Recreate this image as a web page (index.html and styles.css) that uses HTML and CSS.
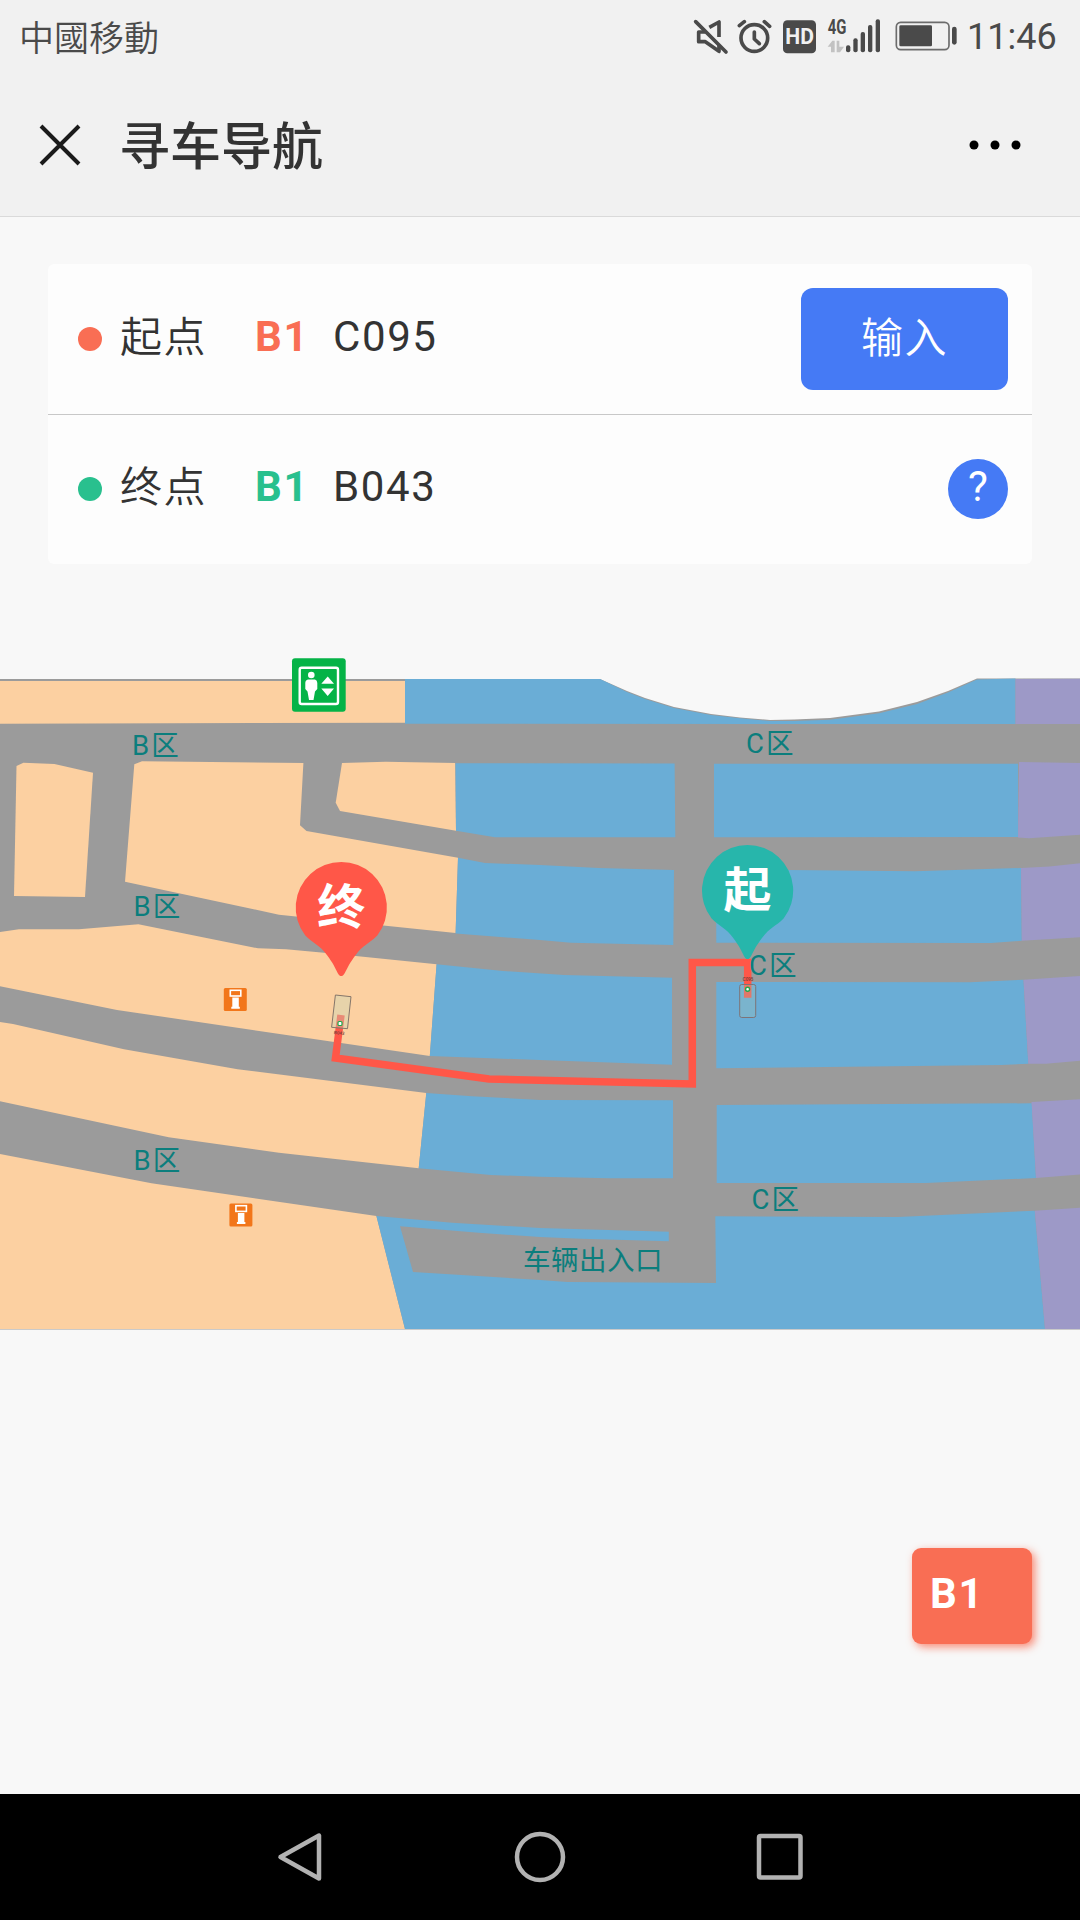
FILE: index.html
```html
<!DOCTYPE html>
<html lang="zh-CN">
<head>
<meta charset="utf-8">
<title>寻车导航</title>
<link rel="stylesheet" href="styles.css">
</head>
<body>
<header class="top">
  <div class="status">
    <span class="carrier">中國移動</span>
    <div class="status-right">
      <svg class="status-icons" width="266" height="38" viewBox="99 50 798 114">
        <g fill="none" stroke="#4a4a4a" stroke-width="11">
          <path d="M148 81L177 65V110M136 95H116V124H136L177 153V134" stroke-linejoin="round"/>
          <path d="M107 64L198 155" stroke-linecap="round"/>
          <circle cx="283" cy="113" r="40"/>
          <path d="M283 95V116L298 130" stroke-linecap="round" stroke-linejoin="round"/>
          <path d="M238 76L253 64M313 64L329 78" stroke-linecap="round"/>
        </g>
        <rect x="369" y="60" width="99" height="99" rx="13" fill="#4a4a4a"/>
        <text class="hd" x="376" y="132" textLength="86" lengthAdjust="spacingAndGlyphs">HD</text>
        <text class="net" x="503" y="101" textLength="56" lengthAdjust="spacingAndGlyphs">4G</text>
        <path d="M503 139L517 121H524V156H513V139ZM530 121H538V139H552L540 156H530Z" fill="#c2c2c2"/>
        <g fill="#4a4a4a">
          <rect x="558" y="135" width="13" height="21" rx="6"/>
          <rect x="580" y="114" width="13" height="42" rx="6"/>
          <rect x="602" y="95" width="13" height="61" rx="6"/>
          <rect x="624" y="74" width="13" height="82" rx="6"/>
          <rect x="647" y="57" width="13" height="99" rx="6"/>
          <rect x="718" y="75" width="98" height="63" rx="4"/>
          <rect x="876" y="79" width="14" height="54" rx="7"/>
        </g>
        <rect x="709" y="66" width="158" height="82" rx="13" fill="none" stroke="#6c6c6c" stroke-width="5"/>
      </svg>
      <span class="clock">11:46</span>
    </div>
  </div>
  <div class="titlebar">
    <svg class="close" width="42" height="42" viewBox="0 0 42 42"><path d="M2 2L40 40M40 2L2 40" stroke="#1a1a1a" stroke-width="4"/></svg>
    <h1 class="title">寻车导航</h1>
    <svg class="more" width="54" height="10" viewBox="0 0 54 10"><circle cx="6" cy="5" r="4.5"/><circle cx="27" cy="5" r="4.5"/><circle cx="48" cy="5" r="4.5"/></svg>
  </div>
</header>

<main class="content">
  <section class="card">
    <div class="row">
      <i class="dot start"></i><span class="label">起点</span><b class="floor start-text">B1</b><span class="spot">C095</span>
      <button class="enter">输入</button>
    </div>
    <div class="row">
      <i class="dot end"></i><span class="label">终点</span><b class="floor end-text">B1</b><span class="spot">B043</span>
      <button class="help">?</button>
    </div>
  </section>

  <svg class="map" width="1080" height="700" viewBox="0 640 1080 700">
    <path fill="#9b9b9b" d="M0 679H600L627 691L645 698L674 707L711 714L740 717.5L770 720L794 719.5L830 718L879 711.5L917 702L948 691L977 678.5H1080V1329.500H0Z"/>
    <g fill="#fcd0a1">
      <path d="M0 681H405V722.700L0 723.700Z"/>
      <path d="M16.500 766L23.400 762.800L54.400 764L93 772.700L85 897L14 896Z"/>
      <path d="M134.300 764.300L142 761.300L303.400 763L300 825.300L306.500 831L458 857.700L455.600 933L385.700 925.700L279 914.700L125 881.700Z"/>
      <path d="M342 763L385.700 761.700L455.200 763L456 830.700L340 811L335.700 802.700Z"/>
      <path d="M0 932L19 929.300H79L138.400 924.300L258 948.300L286 949.300L324 952.700L436.600 964.300L429.800 1056L117 1010L0 986.300Z"/>
      <path d="M0 1022L13 1024L124 1049.300L237.600 1069.300L426.300 1093L418.700 1168.300L279 1152.700L168.700 1137.300L0 1101.300Z"/>
      <path d="M0 1154L151.500 1183.300L376.400 1216L405 1329H0Z"/>
    </g>
    <g fill="#6aadd6">
      <path d="M405 679H600L627 692L645 699L674 708L711 715L740 718.300L770 721L794 721L830 719.700L879 713.300L917 704L948 692.500L977 679.500L1015.500 678.500V724L405 723.700Z"/>
      <path d="M455.500 763.200L674.600 763.500L675.300 837.300H495L456 830.700Z"/>
      <path d="M458 857.700L485 863L540 865L598.500 868L674 870L673.300 945L571 942.700L540 940L455.600 933.500Z"/>
      <path d="M436.600 964.300L503 971L564 975L672 977.700V1064.700L540 1060L429.800 1056Z"/>
      <path d="M426.300 1093L472 1096.300L540 1100L673 1100.300V1178.300H609L540 1176.700L490.700 1175L418.700 1168.300Z"/>
      <path d="M376.400 1216L452 1222.700L540 1228L668.800 1231.700V1241.300L581 1238.700L540 1237L478.700 1232.700L400 1226.300L413 1272L540 1280L567.500 1282L716 1283L715.300 1216.300L898 1217L1034.800 1210.700L1045 1329H405Z"/>
      <path d="M714 763.700H1018V837L714 837.300Z"/>
      <path d="M716 870H788L915 871.300L1021 868L1021.800 940.700L991 943L716.300 942.700Z"/>
      <path d="M716.300 982L970 982.300L1023.500 979.700L1028.300 1063.700L1001.500 1065L716.300 1068.300Z"/>
      <path d="M716.700 1105L1031.800 1103.300L1036 1178L925.700 1183H716.700Z"/>
    </g>
    <g fill="#9d99c7">
      <path d="M1015.500 679L1080 678.700V724H1015.500Z"/>
      <path d="M1019 762L1080 763V834.700L1029 838.300L1018 837.500Z"/>
      <path d="M1021 868L1049.600 866.500L1080 863.300V937.300L1021.800 940.700Z"/>
      <path d="M1023.500 979.700L1080 976V1060.700L1046 1063.700H1028.300Z"/>
      <path d="M1031.500 1102L1080 1099.300V1174.500L1036 1178Z"/>
      <path d="M1034.800 1210.700L1080 1207.700V1329H1045Z"/>
    </g>

    <path d="M341 1015L335.500 1058L489 1079L692.300 1084V962.500H747.700V997.700" fill="none" stroke="#ff5748" stroke-width="7.500"/>
    <g class="zone">
      <text x="132" y="755">B区</text>
      <text x="133.500" y="916">B区</text>
      <text x="133.500" y="1170">B区</text>
      <text x="746" y="753">C区</text>
      <text x="749" y="975">C区</text>
      <text x="751.500" y="1209">C区</text>
      <text class="gate" x="523" y="1270">车辆出入口</text>
    </g>

    <!-- lift -->
    <rect x="292" y="658.300" width="53.700" height="53.400" rx="3" fill="#05b347"/>
    <rect x="299.700" y="667.700" width="38.300" height="36.300" rx="2" fill="none" stroke="#fff" stroke-width="2.400"/>
    <g fill="#fff">
      <circle cx="311.300" cy="675" r="3.300"/>
      <path d="M308 679.500H315Q317.300 680 317.300 683V689L315 691.500L313.500 700H309L307.500 691.500L305.300 689V683Q305.300 680 308 679.500Z"/>
      <path d="M327.700 676.500L334 683.800H321.300ZM321.300 688.500H334L327.700 696Z"/>
    </g>
    <!-- payment kiosks -->
    <g transform="translate(223.800 988)">
      <rect width="23" height="23" rx="1.500" fill="#f2761a"/>
      <rect x="6.500" y="2.300" width="10.500" height="5.700" fill="none" stroke="#fff" stroke-width="1.600"/>
      <path d="M8.500 9.500H15V18.700H16V20.700H7.500V18.700H8.500Z" fill="#fff"/>
    </g>
    <g transform="translate(229.400 1203.400)">
      <rect width="23" height="23" rx="1.500" fill="#f2761a"/>
      <rect x="6.500" y="2.300" width="10.500" height="5.700" fill="none" stroke="#fff" stroke-width="1.600"/>
      <path d="M8.500 9.500H15V18.700H16V20.700H7.500V18.700H8.500Z" fill="#fff"/>
    </g>
    <!-- parking spots -->
    <path d="M335.400 995L351 996.700L347.500 1028.700L331.600 1027.300Z" fill="#c8d6b8" fill-opacity=".4" stroke="#85766a" stroke-width="1" stroke-linejoin="round"/>
    <rect x="338" y="1021.500" width="4" height="4" rx="1" fill="#fff" stroke="#1fa84a" stroke-width="1.200"/>
    <text class="tiny" x="334" y="1034.500" transform="rotate(6 339 1033)">B043</text>
    <rect x="739.700" y="984.500" width="16" height="33" rx="2" fill="#a0c8b8" fill-opacity=".3" stroke="#7d7478" stroke-width="1"/>
    <circle cx="747.600" cy="989.300" r="2" fill="#fff" stroke="#1fa84a" stroke-width="1.400"/>
    <text class="tiny" x="742.700" y="981">C095</text>

    <g transform="translate(341.300 907.500)">
      <path d="M0 68.500C-4 68.500 -3.500 62 -14 48C-22 37 -28 36 -36 28A45.600 45.600 0 1 1 36 28C28 36 22 37 14 48C3.500 62 4 68.500 0 68.500Z" fill="#ff5748"/>
      <text class="pin-text" x="0" y="16">终</text>
    </g>
    <g transform="translate(747.600 890.500)">
      <path d="M0 68.500C-4 68.500 -3.500 62 -14 48C-22 37 -28 36 -36 28A45.600 45.600 0 1 1 36 28C28 36 22 37 14 48C3.500 62 4 68.500 0 68.500Z" fill="#27b6ab"/>
      <text class="pin-text" x="0" y="16">起</text>
    </g>
  </svg>

  <button class="level">B1</button>
</main>

<nav class="sysnav">
  <svg width="52" height="56" viewBox="0 0 52 56"><path d="M45 6.500V49.500L6.500 28Z"/></svg>
  <svg width="52" height="56" viewBox="0 0 52 56"><circle cx="26" cy="28" r="23"/></svg>
  <svg width="52" height="56" viewBox="0 0 52 56"><rect x="5" y="7" width="41.500" height="41.500" rx="1.500"/></svg>
</nav>
</body>
</html>
```
FILE: styles.css
```css
* { box-sizing: border-box; }

body {
  margin: 0;
  width: 1080px;
  height: 1920px;
  display: flex;
  flex-direction: column;
  background: #f8f8f8;
  color: #333;
  font-family: Roboto, "Noto Sans CJK SC", sans-serif;
  overflow: hidden;
}

button {
  border: 0;
  padding: 0;
  color: #fff;
  font: inherit;
  letter-spacing: inherit;
}

.top {
  height: 217px;
  background: #f1f1f1;
  border-bottom: 1px solid #dadada;
}

.status {
  height: 72px;
  padding: 0 25px 0 19px;
  display: flex;
  justify-content: space-between;
  align-items: center;
  color: #4a4a4a;
}

.carrier {
  font: 350 35px/50px "Noto Sans CJK TC", sans-serif;
}

.status-right {
  display: flex;
  align-items: center;
}

.status-icons { margin-right: 8px; }

.clock {
  width: 88px;
  padding-top: 3px;
  font-size: 36px;
  line-height: 71px;
  white-space: nowrap;
}

.hd { font: 700 64px Roboto, sans-serif; fill: #f1f1f1; }
.net { font: 700 60px Roboto, sans-serif; fill: #4a4a4a; }

.titlebar {
  height: 146px;
  padding: 0 58px 0 39px;
  display: flex;
  align-items: center;
}

.title {
  flex: 1;
  margin: 0 0 0 38px;
  padding-top: 5px;
  font-size: 51px;
  font-weight: 500;
  line-height: 72px;
}

.content {
  flex: 1;
  display: flex;
  flex-direction: column;
}

.card {
  margin: 47px 48px 0;
  height: 300px;
  background: #fdfdfd;
  border-radius: 6px;
  font-size: 42px;
  letter-spacing: 1.600px;
}

.row {
  height: 150px;
  padding: 0 24px 0 30px;
  display: flex;
  align-items: center;
}

.row + .row { box-shadow: inset 0 1px #c8c8c8; }

.dot {
  width: 24px;
  height: 24px;
  border-radius: 50%;
}

.start { background: #f96e54; }
.end { background: #29c08e; }
.start-text { color: #f96e54; }
.end-text { color: #29c08e; }

.label, .floor, .spot { line-height: 60px; padding-bottom: 4px; }
.label { width: 135px; margin-left: 18px; padding-bottom: 3px; font-weight: 350; }
.floor { width: 78px; }
.spot { flex: 1; }

.enter {
  width: 207px;
  height: 102px;
  padding-bottom: 9px;
  background: #457af5;
  border-radius: 12px;
  font-weight: 350;
}

.help {
  width: 60px;
  height: 60px;
  padding-bottom: 5px;
  background: #457af5;
  border-radius: 50%;
  line-height: 55px;
  letter-spacing: 0;
}

.map {
  display: block;
  margin-top: 76px;
}

.zone {
  font-size: 27.500px;
  letter-spacing: 2px;
  fill: #0b7e7d;
}

.zone .gate { letter-spacing: 0.500px; }

.tiny { font-size: 4.500px; font-weight: 500; fill: #703c38; }

.pin-text {
  font-size: 48px;
  font-weight: 700;
  text-anchor: middle;
  fill: #fff;
}

.level {
  align-self: flex-end;
  width: 120px;
  height: 96px;
  margin: 208px 48px 0 0;
  padding: 0 0 6px 18px;
  background: #f96e54;
  border-radius: 9px;
  box-shadow: 3px 3px 9px rgba(249, 110, 84, 0.800);
  font-size: 42px;
  font-weight: 700;
  letter-spacing: 1.600px;
  text-align: left;
}

.sysnav {
  height: 126px;
  padding: 0 274px;
  display: flex;
  justify-content: space-between;
  align-items: center;
  background: #000;
}

.sysnav svg {
  fill: none;
  stroke: #b2b2b2;
  stroke-width: 4.500;
  stroke-linejoin: round;
}
```
